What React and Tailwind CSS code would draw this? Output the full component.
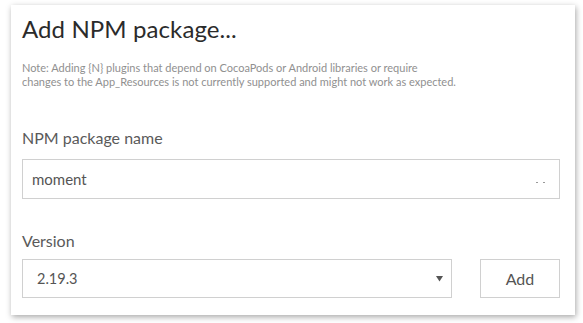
export default function App() {
  return (
    <div className="min-h-screen bg-white pl-[11px] pt-[5px] font-['Lato','Open_Sans',sans-serif]">
      <div className="w-[564px] h-[310px] bg-white shadow-[1px_2px_6px_rgba(0,0,0,0.35)] px-[11px] pt-[9px]">
        <h1 className="text-[24px] leading-[30px] text-[#2b2b2b] font-normal tracking-[0.1px]">
          Add NPM package...
        </h1>
        <p className="mt-[17px] text-[11px] leading-[14px] text-[#909090] w-[520px]">
          Note: Adding {"{N}"} plugins that depend on CocoaPods or Android libraries or require
          <br />
          changes to the App_Resources is not currently supported and might not work as expected.
        </p>

        <label className="block mt-[39px] text-[16px] leading-[20px] text-[#5a5a5a]">
          NPM package name
        </label>
        <div className="mt-[11px] w-[538px] h-[40px] border border-[#d0d0d0] flex items-center justify-between pl-[9px] pr-[14px]">
          <span className="text-[15px] text-[#555]">moment</span>
          <span className="flex gap-[5px] pt-[6px]">
            <span className="w-[2px] h-[1px] bg-[#999]" />
            <span className="w-[2px] h-[1px] bg-[#999]" />
          </span>
        </div>

        <label className="block mt-[32px] text-[16px] leading-[20px] text-[#5a5a5a]">
          Version
        </label>
        <div className="mt-[8px] flex gap-[28px]">
          <div className="w-[430px] h-[39px] border border-[#d0d0d0] flex items-center justify-between pl-[14px] pr-[8px]">
            <span className="text-[14.5px] text-[#555]">2.19.3</span>
            <svg width="7" height="7" viewBox="0 0 7 7">
              <path d="M0 1h7L3.5 6.5z" fill="#555" />
            </svg>
          </div>
          <button className="w-[80px] h-[39px] border border-[#d0d0d0] bg-white text-[16px] text-[#555]">
            Add
          </button>
        </div>
      </div>
    </div>
  );
}
